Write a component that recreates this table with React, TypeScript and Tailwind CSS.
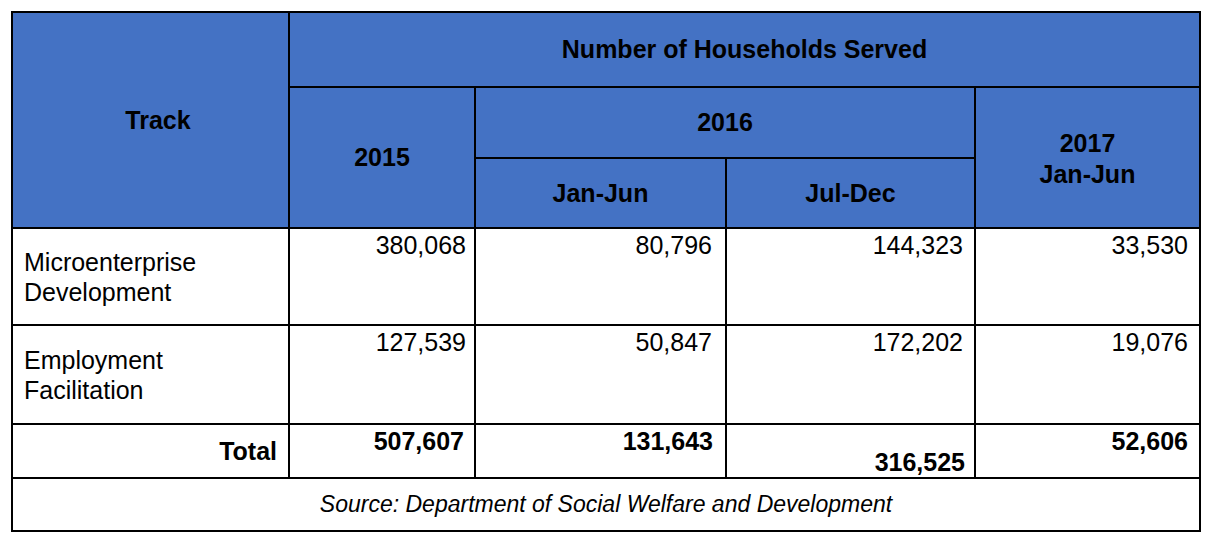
const HEAD = "flex items-center justify-center bg-[#4472c4] text-center text-[25px] font-bold leading-[31px] text-black";
const NUM = "bg-white text-right text-[25px] leading-[29px] text-black";

interface DataRow {
  track: string[];
  values: { text: string; pad: string }[];
}

const ROWS: DataRow[] = [
  {
    track: ["Microenterprise", "Development"],
    values: [
      { text: "380,068", pad: "pr-2" },
      { text: "80,796", pad: "pr-[13px]" },
      { text: "144,323", pad: "pr-[11px]" },
      { text: "33,530", pad: "pr-[11px]" },
    ],
  },
  {
    track: ["Employment", "Facilitation"],
    values: [
      { text: "127,539", pad: "pr-2" },
      { text: "50,847", pad: "pr-[13px]" },
      { text: "172,202", pad: "pr-[11px]" },
      { text: "19,076", pad: "pr-[11px]" },
    ],
  },
];

export default function App() {
  return (
    <div className="min-h-[543px] w-[1212px] bg-white pl-[11px] pt-[11px] font-['Liberation_Sans',Arial,sans-serif]">
      <div className="grid w-[1190px] grid-cols-[275px_184px_249px_247px_223px] grid-rows-[73px_69px_68px_95px_97px_52px_51px] gap-[2px] bg-black p-[2px]">
        {/* header */}
        <div className={`${HEAD} row-span-3 pl-[15px]`}>Track</div>
        <div className={`${HEAD} col-span-4`}>Number of Households Served</div>
        <div className={`${HEAD} row-span-2`}>2015</div>
        <div className={`${HEAD} col-span-2`}>2016</div>
        <div className={`${HEAD} row-span-2 flex-col pt-[3px]`}>
          <span>2017</span>
          <span>Jan-Jun</span>
        </div>
        <div className={HEAD}>Jan-Jun</div>
        <div className={HEAD}>Jul-Dec</div>

        {/* body */}
        {ROWS.map((row) => (
          <div key={row.track[0]} className="contents">
            <div className="flex flex-col justify-center bg-white pl-[11px] text-[25px] leading-[30px] text-black">
              {row.track.map((t) => (
                <span key={t}>{t}</span>
              ))}
            </div>
            {row.values.map((v) => (
              <div key={v.text} className={`${NUM} ${v.pad} pt-[2px]`}>
                {v.text}
              </div>
            ))}
          </div>
        ))}

        {/* total */}
        <div className="flex items-center justify-end bg-white pr-[11px] pt-[2px] text-[25px] font-bold text-black">
          Total
        </div>
        <div className={`${NUM} pr-[10px] pt-[2px] font-bold`}>507,607</div>
        <div className={`${NUM} pr-3 pt-[2px] font-bold`}>131,643</div>
        <div className={`${NUM} flex items-end justify-end pr-[9px] font-bold`}>316,525</div>
        <div className={`${NUM} pr-[11px] pt-[2px] font-bold`}>52,606</div>

        {/* source */}
        <div className="col-span-5 flex items-center justify-center bg-white text-[23px] italic text-black">
          Source: Department of Social Welfare and Development
        </div>
      </div>
    </div>
  );
}
